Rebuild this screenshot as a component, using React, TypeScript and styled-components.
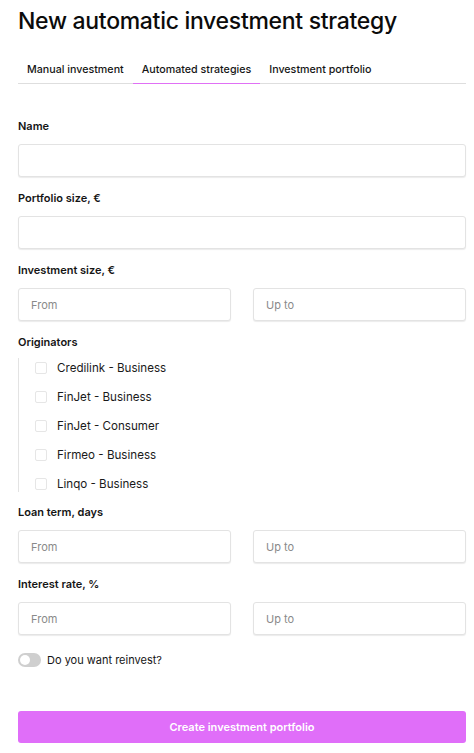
import React from "react";
import styled, { createGlobalStyle } from "styled-components";

const Global = createGlobalStyle`
  html, body {
    margin: 0;
    padding: 0;
    background: #fff;
    font-family: Inter, "Noto Sans", sans-serif;
    color: #111;
  }
  * { box-sizing: border-box; }
`;

const originators = [
  "Credilink - Business",
  "FinJet - Business",
  "FinJet - Consumer",
  "Firmeo - Business",
  "Linqo - Business",
];

const tabs = ["Manual investment", "Automated strategies", "Investment portfolio"];

const App = () => {
  return (
    <>
      <Global />
      <Page>
        <Title>New automatic investment strategy</Title>
        <Tabs>
          {tabs.map((t, i) => (
            <Tab key={t} active={i === 1}>
              {t}
            </Tab>
          ))}
        </Tabs>
        <Form>
          <Field>
            <Label>Name</Label>
            <Input />
          </Field>
          <Field>
            <Label>Portfolio size, €</Label>
            <Input />
          </Field>
          <Field>
            <Label>Investment size, €</Label>
            <Pair>
              <Input placeholder="From" />
              <Input placeholder="Up to" />
            </Pair>
          </Field>
          <Field>
            <Label>Originators</Label>
            <CheckList>
              {originators.map((o) => (
                <CheckRow key={o}>
                  <Box />
                  {o}
                </CheckRow>
              ))}
            </CheckList>
          </Field>
          <Field>
            <Label>Loan term, days</Label>
            <Pair>
              <Input placeholder="From" />
              <Input placeholder="Up to" />
            </Pair>
          </Field>
          <Field>
            <Label>Interest rate, %</Label>
            <Pair>
              <Input placeholder="From" />
              <Input placeholder="Up to" />
            </Pair>
          </Field>
          <ToggleRow>
            <Toggle />
            Do you want reinvest?
          </ToggleRow>
          <Button>Create investment portfolio</Button>
        </Form>
      </Page>
    </>
  );
};

export default App;

const Page = styled.div`
  padding: 6px 8px 0 18px;
  width: 474px;
`;

const Title = styled.h1`
  margin: 0;
  font-size: 23px;
  font-weight: 500;
  letter-spacing: -0.3px;
  line-height: 30px;
  color: #0b0b0b;
`;

const Tabs = styled.div`
  display: flex;
  margin-top: 23px;
  border-bottom: 1px solid #dedede;
`;

const Tab = styled.div<{ active?: boolean }>`
  padding: 4px 9px 7px;
  font-size: 10.7px;
  font-weight: 500;
  color: #151515;
  border-bottom: 1px solid ${(p) => (p.active ? "#e070f5" : "transparent")};
  margin-bottom: -1px;
`;

const Form = styled.div`
  display: flex;
  flex-direction: column;
  padding-top: 35px;
`;

const Field = styled.div`
  display: flex;
  flex-direction: column;
  margin-bottom: 14px;
`;

const Label = styled.div`
  font-size: 11px;
  font-weight: 600;
  color: #151515;
  line-height: 14px;
  margin-bottom: 11px;
`;

const Input = styled.input`
  width: 100%;
  height: 33px;
  border: 1px solid #e3e3e3;
  border-radius: 3px;
  box-shadow: 0 1px 1px rgba(0, 0, 0, 0.08);
  padding: 0 12px;
  font-family: inherit;
  font-size: 11px;
  outline: none;
  &::placeholder {
    color: #8a8a8a;
  }
`;

const Pair = styled.div`
  display: grid;
  grid-template-columns: 1fr 1fr;
  gap: 22px;
`;

const CheckList = styled.div`
  display: flex;
  flex-direction: column;
  gap: 13px;
  border-left: 1px solid #e3e3e3;
  padding: 2px 0 0 16px;
  margin-top: -2px;
  margin-bottom: -1px;
`;

const CheckRow = styled.div`
  display: flex;
  align-items: center;
  gap: 10px;
  font-size: 11.6px;
  color: #1a1a1a;
  line-height: 16px;
`;

const Box = styled.span`
  width: 12px;
  height: 12px;
  border: 1px solid #e6e6e6;
  border-radius: 2px;
`;

const ToggleRow = styled.div`
  display: flex;
  align-items: center;
  gap: 6px;
  font-size: 11px;
  color: #151515;
  margin-top: 4px;
`;

const Toggle = styled.span`
  position: relative;
  width: 23px;
  height: 14px;
  border-radius: 7px;
  background: #cfcfcf;
  &::after {
    content: "";
    position: absolute;
    left: 2px;
    top: 2px;
    width: 10px;
    height: 10px;
    border-radius: 50%;
    background: #fff;
  }
`;

const Button = styled.button`
  margin-top: 44px;
  height: 32px;
  width: 100%;
  border: none;
  border-radius: 3px;
  background: #e06ef9;
  color: #fff;
  font-family: inherit;
  font-size: 11px;
  font-weight: 600;
`;
